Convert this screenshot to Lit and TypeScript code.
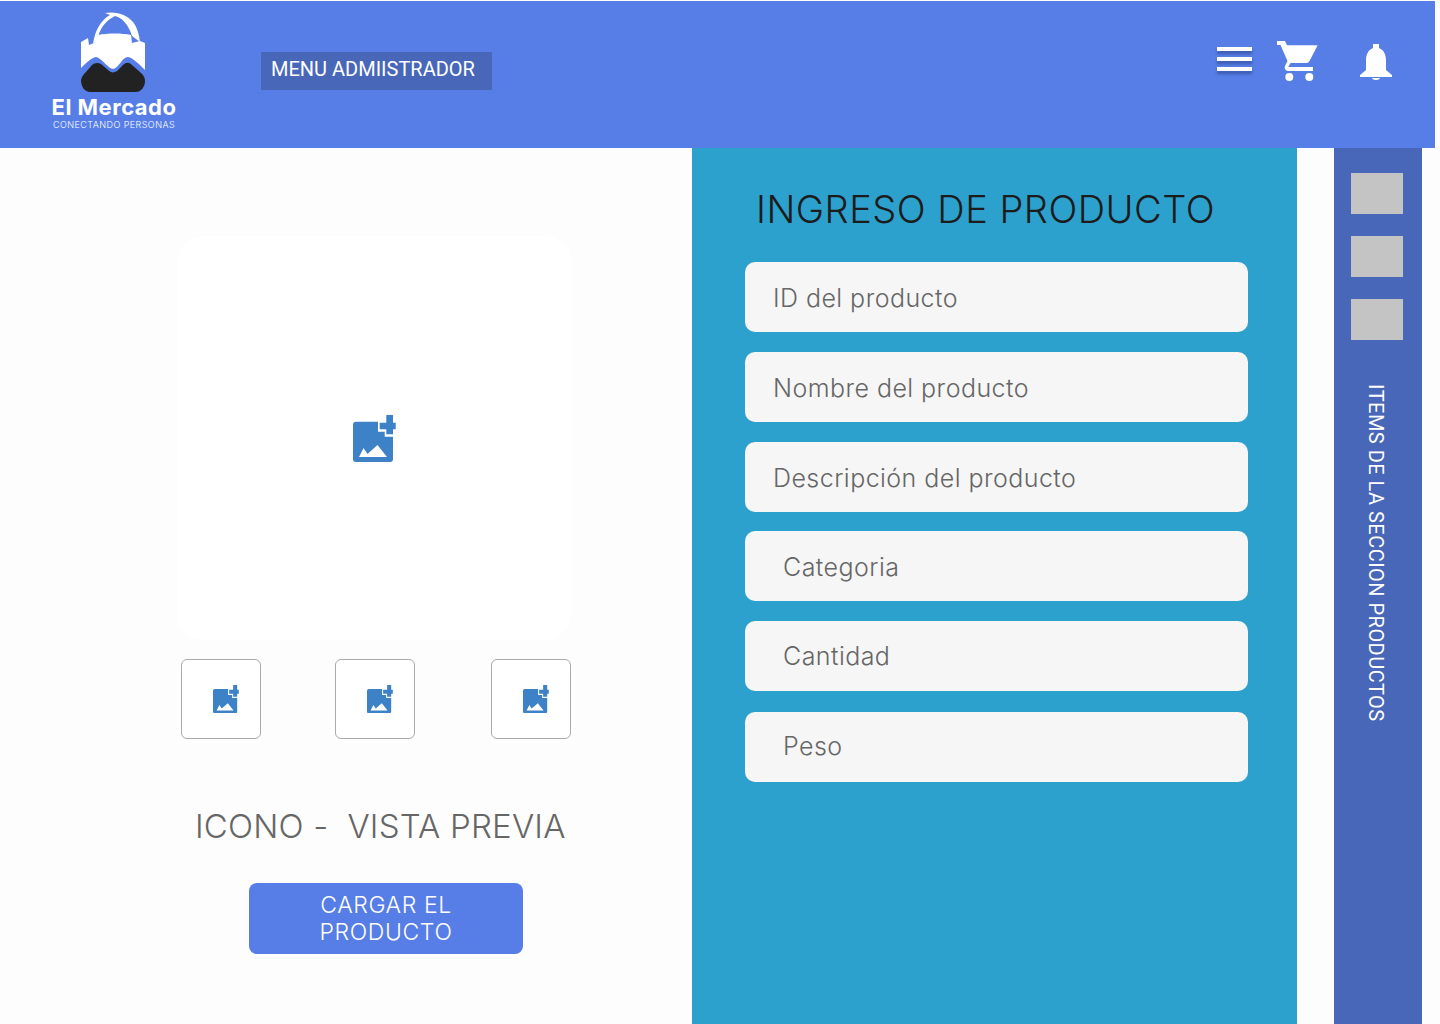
import { LitElement, html, css, svg } from "lit";
import { customElement, property } from "lit/decorators.js";

const addImageIcon = svg`
  <path d="M3 6.700h22v10h6.700v5H40V44a3 3 0 0 1-3 3H3a3 3 0 0 1-3-3V9.700a3 3 0 0 1 3-3z" fill="#3d81c7"/>
  <path d="M33.300 0H40v7.700h2.700v6.600H40v5h-6.700v-5h-6.600V7.700h6.600z" fill="#3d81c7"/>
  <path d="M6 42l4.500-9 4 6L24.500 30 34 42z" fill="#fff"/>
`;

@customElement("add-image-icon")
export class AddImageIcon extends LitElement {
    @property({ type: Number })
    size: number = 43;

    render() {
        return html`<svg viewBox="0 0 43 47" width=${this.size} height=${this.size * 47 / 43}>${addImageIcon}</svg>`;
    }

    static styles = css`
        :host {
            display: inline-flex;
        }
    `;
}

@customElement("app-root")
export class AppRoot extends LitElement {
    fields = [
        { label: "ID del producto", indent: false, gap: 20 },
        { label: "Nombre del producto", indent: false, gap: 20 },
        { label: "Descripción del producto", indent: false, gap: 19 },
        { label: "Categoria", indent: true, gap: 20 },
        { label: "Cantidad", indent: true, gap: 21 },
        { label: "Peso", indent: true, gap: 0 },
    ];

    renderLogo() {
        return html`
            <div class="logo">
                <svg class="bag" viewBox="0 0 64 80" width="64" height="80">
                    <path d="M12 32C14 18 20 8 29 3L24 1C36-1 46 3 52 10C56 15 58 22 59 30L51 24C48 14 42 6 34 4C26 8 19 15 17 26Z" fill="#fff"/>
                    <path d="M0 30L7 26L8 33L13 31L17 23C27 21 41 21 50 23L51 31L59 29L64 31V58C58 52 52 46 47 45C41 45 38 56 32 57C26 56 21 46 15 45C10 46 4 52 0 56Z" fill="#fff"/>
                    <path d="M0 68C1 64 3 62 5 60L11 53C13 51 17 50 20 52L27 58C30 61 33 61 36 59L42 53C45 50 48 50 51 53L60 61C63 64 64 66 64 69C64 75 60 80 55 80H9C4 80 0 75 0 68Z" fill="#222"/>
                </svg>
                <div class="brand">El Mercado</div>
                <div class="tagline">CONECTANDO PERSONAS</div>
            </div>
        `;
    }

    render() {
        return html`
            <header class="topbar">
                ${this.renderLogo()}
                <div class="menu-title">MENU ADMIISTRADOR</div>
                <div class="actions">
                    <div class="burger"><span></span><span></span><span></span></div>
                    <svg class="cart" viewBox="0 0 41 40" width="41" height="40">
                        <path d="M0 0H8L10 4.300H40.500L39.500 6.500L32.500 20C31.900 21.200 30.900 22 29.500 22H13.500L11.500 25.500V26H36V30H11C8.500 30 7 27 8 25L10.500 20L3.500 4H0Z" fill="#fff"/>
                        <circle cx="12.300" cy="36" r="4" fill="#fff"/>
                        <circle cx="32.300" cy="36" r="4" fill="#fff"/>
                    </svg>
                    <svg class="bell" viewBox="0 0 32 36" width="32" height="36">
                        <path d="M13 0h6v4c5 2 7 7 7 12v10l6 5v2H0v-2l6-5V16c0-5 2-10 7-12z" fill="#fff"/>
                        <path d="M12 34h8c0 1-2 2-4 2s-4-1-4-2z" fill="#fff"/>
                    </svg>
                </div>
            </header>
            <main class="content">
                <section class="preview">
                    <div class="drop-area"><add-image-icon size="43"></add-image-icon></div>
                    <div class="thumbs">
                        <div class="thumb"><add-image-icon size="26"></add-image-icon></div>
                        <div class="thumb"><add-image-icon size="26"></add-image-icon></div>
                        <div class="thumb"><add-image-icon size="26"></add-image-icon></div>
                    </div>
                    <h2 class="preview-label">ICONO -&nbsp; VISTA PREVIA</h2>
                    <button class="submit">CARGAR EL<br />PRODUCTO</button>
                </section>
                <section class="form">
                    <h1>INGRESO DE PRODUCTO</h1>
                    <div class="fields">
                        ${this.fields.map(
                            (f) => html`
                                <div class="field ${f.indent ? "indent" : ""}" style="margin-bottom: ${f.gap}px">${f.label}</div>
                            `
                        )}
                    </div>
                </section>
                <aside class="sidebar">
                    <div class="tile"></div>
                    <div class="tile"></div>
                    <div class="tile"></div>
                    <div class="side-label">ITEMS DE LA SECCION PRODUCTOS</div>
                </aside>
            </main>
        `;
    }

    static styles = css`
        :host {
            display: block;
            width: 1440px;
            height: 1024px;
            overflow: hidden;
            background-color: #fdfdfd;
            font-family: "Inter", "Liberation Sans", sans-serif;
        }

        .topbar {
            display: flex;
            align-items: flex-start;
            width: 1435px;
            height: 147px;
            margin-top: 1px;
            background-color: #567ee6;
            box-sizing: border-box;
        }

        .logo {
            display: flex;
            flex-direction: column;
            align-items: center;
            width: 124px;
            margin-left: 52px;
            padding-top: 11px;
            color: #fff;
        }

        .bag {
            display: block;
            margin-right: 2px;
        }

        .brand {
            margin-top: 2px;
            font-size: 22px;
            line-height: 26px;
            font-weight: 700;
            letter-spacing: 0.500px;
            white-space: nowrap;
        }

        .tagline {
            font-size: 9px;
            font-weight: 300;
            line-height: 10px;
            letter-spacing: 0.450px;
            white-space: nowrap;
        }

        .menu-title {
            margin: 51px 0 0 85px;
            width: 231px;
            height: 38px;
            box-sizing: border-box;
            padding-left: 10px;
            background-color: #4867b9;
            color: #fff;
            font-family: Roboto, sans-serif;
            font-size: 20px;
            line-height: 34px;
        }

        .actions {
            display: flex;
            align-items: flex-start;
            margin-left: auto;
            padding: 40px 43px 0 0;
        }

        .burger {
            display: flex;
            flex-direction: column;
            gap: 6px;
            margin: 6px 25px 0 0;
            width: 35px;
        }

        .burger span {
            height: 4px;
            background-color: #fff;
            box-shadow: 0 3px 3px rgba(40, 60, 130, 0.55);
        }

        .cart {
            display: block;
            margin: 0 42px 0 0;
        }

        .bell {
            display: block;
            margin-top: 3px;
        }

        .content {
            display: flex;
            height: 876px;
        }

        .preview {
            display: flex;
            flex-direction: column;
            width: 692px;
            padding: 88px 0 0 177px;
            box-sizing: border-box;
        }

        .drop-area {
            display: flex;
            align-items: center;
            justify-content: center;
            width: 394px;
            height: 404px;
            border-radius: 26px;
            background-color: #fff;
        }

        .thumbs {
            display: flex;
            gap: 74px;
            width: 390px;
            margin: 19px 0 0 4px;
        }

        .thumb {
            display: flex;
            align-items: center;
            justify-content: center;
            width: 80px;
            height: 80px;
            box-sizing: border-box;
            padding-left: 10px;
            border: 1px solid #aaa;
            border-radius: 6px;
            background-color: #fff;
        }

        .thumb:nth-child(3) {
            margin-left: 2px;
        }

        .preview-label {
            margin: 66px 0 0 18px;
            font-size: 33px;
            line-height: 42px;
            font-weight: 300;
            letter-spacing: 0.200px;
            color: #666;
            white-space: nowrap;
        }

        .submit {
            width: 274px;
            height: 71px;
            margin: 36px 0 0 72px;
            padding: 0;
            border: none;
            border-radius: 8px;
            background-color: #567ee6;
            color: #fff;
            font-family: inherit;
            font-size: 23px;
            font-weight: 300;
            line-height: 27px;
            letter-spacing: 0.600px;
        }

        .form {
            width: 605px;
            background-color: #2ca1cd;
            padding: 0 0 0 53px;
            box-sizing: border-box;
        }

        .form h1 {
            margin: 38px 0 0 11px;
            font-size: 38px;
            line-height: 46px;
            font-weight: 300;
            letter-spacing: 0.500px;
            color: #1c1c1c;
            white-space: nowrap;
        }

        .fields {
            margin-top: 30px;
        }

        .field {
            width: 503px;
            height: 70px;
            box-sizing: border-box;
            padding-left: 28px;
            border-radius: 10px;
            background-color: #f6f6f6;
            color: #666;
            font-size: 25px;
            font-weight: 300;
            line-height: 72px;
            letter-spacing: 0.450px;
        }

        .field.indent {
            padding-left: 38px;
        }

        .field:nth-child(5) {
            line-height: 70px;
        }

        .field:nth-child(6) {
            line-height: 68px;
        }

        .sidebar {
            display: flex;
            flex-direction: column;
            align-items: center;
            width: 88px;
            margin-left: 37px;
            padding: 25px 2px 0 0;
            box-sizing: border-box;
            background-color: #4867b9;
        }

        .tile {
            width: 52px;
            height: 41px;
            margin-bottom: 22px;
            background-color: #c4c4c4;
        }

        .side-label {
            margin: 22px 2px 0 0;
            writing-mode: vertical-rl;
            color: #fff;
            font-family: Roboto, sans-serif;
            font-size: 20px;
            line-height: 24px;
            letter-spacing: 0.480px;
            white-space: nowrap;
        }
    `;
}
